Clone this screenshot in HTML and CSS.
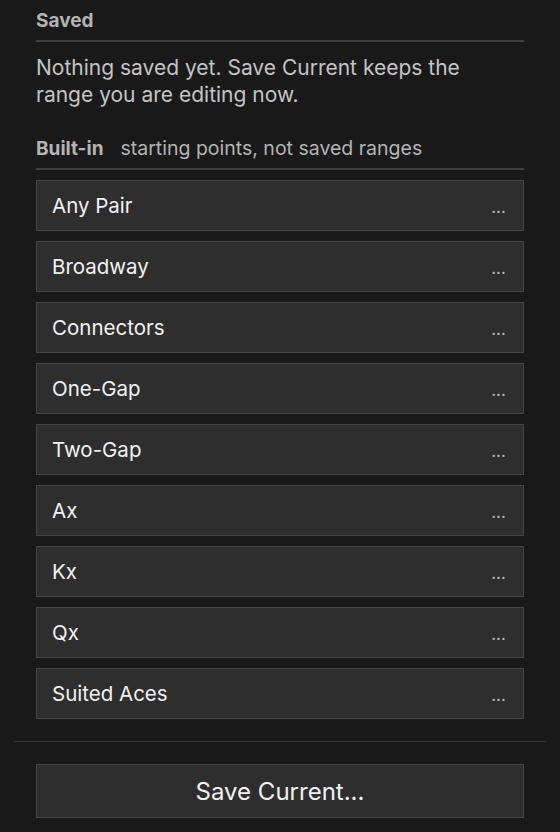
FILE: index.html
```html
<!DOCTYPE html>
<html lang="en">
<head>
    <meta charset="UTF-8">
    <meta name="viewport" content="width=device-width, initial-scale=1.0">
    <title>Ranges</title>
    <link rel="stylesheet" href="styles.css">
</head>
<body>
    <div class="panel">
        <div class="section">
            <div class="section-header">
                <h2>Saved</h2>
            </div>
            <p class="empty-note">Nothing saved yet. Save Current keeps the range you are editing now.</p>

            <div class="section-header builtin-header">
                <h2>Built-in</h2>
                <span class="hint">starting points, not saved ranges</span>
            </div>

            <div class="range-list">
                <div class="range-row"><span class="range-name">Any Pair</span><span class="more">...</span></div>
                <div class="range-row"><span class="range-name">Broadway</span><span class="more">...</span></div>
                <div class="range-row"><span class="range-name">Connectors</span><span class="more">...</span></div>
                <div class="range-row"><span class="range-name">One-Gap</span><span class="more">...</span></div>
                <div class="range-row"><span class="range-name">Two-Gap</span><span class="more">...</span></div>
                <div class="range-row"><span class="range-name">Ax</span><span class="more">...</span></div>
                <div class="range-row"><span class="range-name">Kx</span><span class="more">...</span></div>
                <div class="range-row"><span class="range-name">Qx</span><span class="more">...</span></div>
                <div class="range-row"><span class="range-name">Suited Aces</span><span class="more">...</span></div>
            </div>
        </div>

        <div class="footer">
            <button type="button" class="btn">Save Current...</button>
        </div>
    </div>
</body>
</html>
```

FILE: styles.css
```css
* {
    box-sizing: border-box;
    margin: 0;
    padding: 0;
    font-family: Inter, 'Liberation Sans', sans-serif;
}

body {
    background-color: #191919;
    color: #e8e8e8;
}

.panel {
    padding: 0 14px;
}

.section {
    padding: 0 22px;
}

.section-header {
    display: flex;
    align-items: baseline;
    gap: 17px;
    padding-top: 10px;
    padding-bottom: 8px;
    border-bottom: 2px solid #3e3e3e;
}

h2 {
    font-size: 19px;
    font-weight: 700;
    color: #b4b4b4;
    line-height: 22px;
}

.hint {
    font-size: 19.5px;
    color: #b4b4b4;
}

.empty-note {
    font-size: 21px;
    line-height: 27px;
    color: #c4c4c4;
    margin-top: 12px;
    padding-right: 40px;
}

.builtin-header {
    padding-top: 28px;
}

.range-list {
    display: flex;
    flex-direction: column;
    gap: 10px;
    margin-top: 10px;
}

.range-row {
    display: flex;
    align-items: center;
    justify-content: space-between;
    height: 51px;
    padding: 0 17px 0 15px;
    background-color: #2e2e2e;
    border: 1px solid #464646;
    color: #f2f2f2;
    font-size: 20.5px;
}

.more {
    font-size: 13px;
    font-weight: 700;
    color: #b8b8b8;
    letter-spacing: 0.5px;
    padding-top: 5px;
}

.footer {
    margin-top: 22px;
    border-top: 1px solid #353535;
    padding: 22px 22px 0;
}

.btn {
    width: 100%;
    height: 54px;
    background-color: #2e2e2e;
    border: 1px solid #464646;
    color: #f2f2f2;
    font-size: 24px;
    cursor: pointer;
}
```
